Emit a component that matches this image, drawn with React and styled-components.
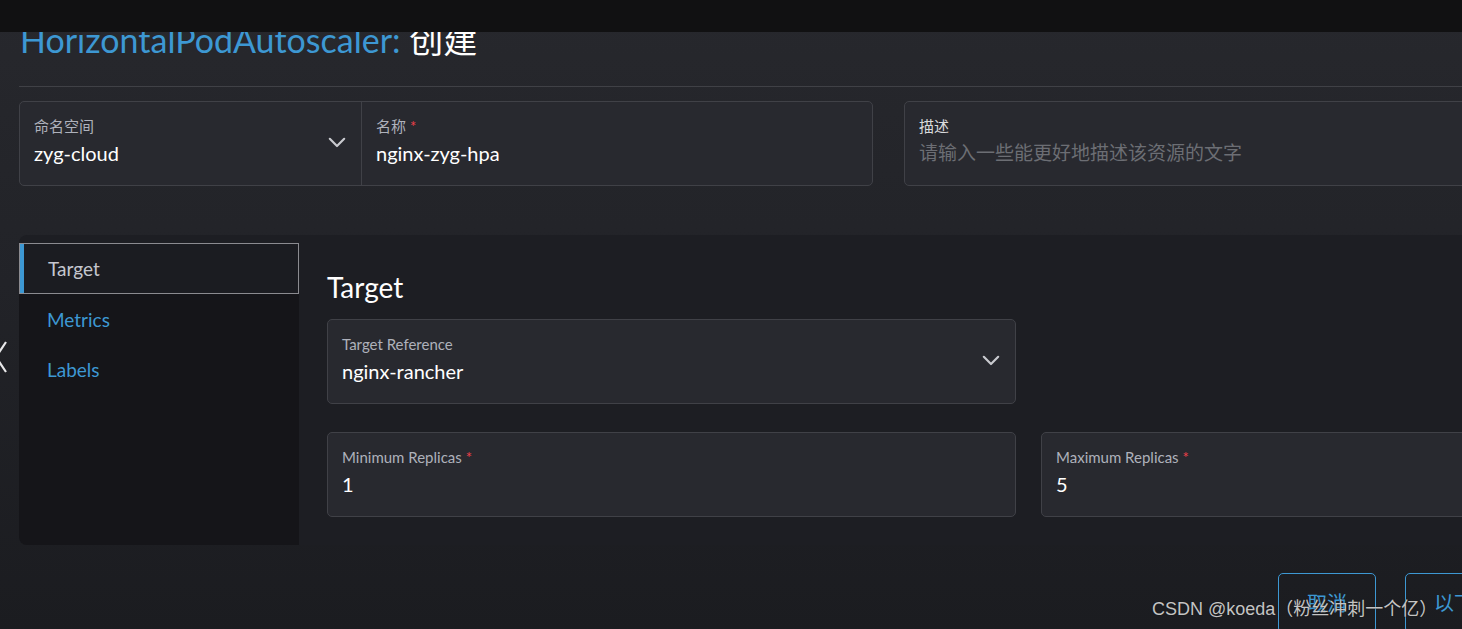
import React from 'react'
import styled, { createGlobalStyle } from 'styled-components'

const GlobalStyle = createGlobalStyle`
  html, body {
    margin: 0;
    padding: 0;
    height: 100%;
  }
  body {
    font-family: Lato, "Noto Sans CJK SC", "Noto Sans", sans-serif;
    background: linear-gradient(180deg, #27282d 0%, #222328 45%, #1b1c20 100%);
    color: #e6e6e8;
    overflow: hidden;
  }
`

const Chevron = ({ size = 18 }) => (
  <svg width={size} height={size * 0.6} viewBox="0 0 20 12" fill="none">
    <path d="M2 2 L10 10 L18 2" stroke="#c9cacf" strokeWidth="2.4" strokeLinecap="round" strokeLinejoin="round" />
  </svg>
)

const Field = ({ label, value, required, placeholder, select, dimLabel }) => (
  <FieldInner>
    <FieldText>
      <Label $bright={dimLabel}>
        {label}
        {required && <Star>*</Star>}
      </Label>
      {value ? <Value>{value}</Value> : <Placeholder>{placeholder}</Placeholder>}
    </FieldText>
    {select && (
      <Caret>
        <Chevron />
      </Caret>
    )}
  </FieldInner>
)

const App = () => (
  <Page>
    <GlobalStyle />
    <TopBar />
    <Title>
      <Kind>HorizontalPodAutoscaler:</Kind> 创建
    </Title>
    <Divider />

    <NameRow>
      <Box $width="854px">
        <Split $width="341px">
          <Field label="命名空间" value="zyg-cloud" select />
        </Split>
        <Split $grow>
          <Field label="名称" value="nginx-zyg-hpa" required />
        </Split>
      </Box>
      <Box $grow>
        <Field label="描述" placeholder="请输入一些能更好地描述该资源的文字" dimLabel />
      </Box>
    </NameRow>

    <Tabbed>
      <SideNav>
        <Tab $active>Target</Tab>
        <Tab>Metrics</Tab>
        <Tab>Labels</Tab>
      </SideNav>
      <Content>
        <Heading>Target</Heading>
        <Row>
          <Box $width="689px">
            <Field label="Target Reference" value="nginx-rancher" select />
          </Box>
        </Row>
        <Row $gap="25px">
          <Box $width="689px">
            <Field label="Minimum Replicas" value="1" required />
          </Box>
          <Box $grow>
            <Field label="Maximum Replicas" value="5" required />
          </Box>
        </Row>
      </Content>
    </Tabbed>

    <Footer>
      <OutlineButton $width="98px">取消</OutlineButton>
      <OutlineButton $width="98px">以下</OutlineButton>
    </Footer>

    <Collapse>
      <svg width="14" height="34" viewBox="0 0 14 34" fill="none">
        <path d="M12 2 L2 17 L12 32" stroke="#e8e8ea" strokeWidth="2.2" />
      </svg>
    </Collapse>

    <Watermark>CSDN @koeda（粉丝冲刺一个亿）</Watermark>
  </Page>
)

export default App

const Page = styled.div`
  position: relative;
  height: 629px;
  padding-left: 19px;
  overflow: hidden;
`

const TopBar = styled.div`
  position: absolute;
  left: 0;
  top: 0;
  right: 0;
  height: 32px;
  background: #111112;
  z-index: 2;
`

const Title = styled.h1`
  margin: 0;
  padding-top: 20px;
  padding-left: 1px;
  font-size: 34px;
  font-weight: 400;
  line-height: 40px;
  color: #ffffff;
  white-space: nowrap;
`

const Kind = styled.span`
  color: #3d98d3;
`

const Divider = styled.div`
  margin-top: 26px;
  height: 1px;
  background: #404146;
`

const NameRow = styled.div`
  display: flex;
  gap: 31px;
  margin-top: 14px;
  width: 1700px;
`

const Row = styled.div`
  display: flex;
  gap: ${(p) => p.$gap || '0'};
  margin-bottom: 28px;
  width: 1400px;
`

const Box = styled.div`
  display: flex;
  box-sizing: border-box;
  height: 85px;
  width: ${(p) => p.$width || 'auto'};
  flex: ${(p) => (p.$grow ? '1' : 'none')};
  background: #28292f;
  border: 1px solid #404147;
  border-radius: 5px;
`

const Split = styled.div`
  display: flex;
  width: ${(p) => p.$width || 'auto'};
  flex: ${(p) => (p.$grow ? '1' : 'none')};
  & + & {
    border-left: 1px solid #404147;
  }
`

const FieldInner = styled.div`
  flex: 1;
  display: flex;
  align-items: center;
  padding: 0 15px 0 14px;
`

const FieldText = styled.div`
  flex: 1;
  display: flex;
  flex-direction: column;
  padding-bottom: 6px;
`

const Label = styled.div`
  font-size: 15px;
  line-height: 18px;
  color: ${(p) => (p.$bright ? '#d9dadc' : '#aeb1bb')};
`

const Star = styled.span`
  color: #f0404a;
  margin-left: 4px;
`

const Value = styled.div`
  margin-top: 6px;
  font-size: 20px;
  line-height: 24px;
  color: #ffffff;
`

const Placeholder = styled(Value)`
  color: #6c6e74;
  font-size: 19px;
`

const Caret = styled.div`
  display: flex;
  align-items: center;
  padding-bottom: 2px;
`

const Tabbed = styled.div`
  display: flex;
  margin-top: 49px;
  height: 310px;
  background: #1d1e23;
  border-radius: 8px 0 0 8px;
  width: 1500px;
`

const SideNav = styled.div`
  flex: none;
  width: 280px;
  margin-top: 8px;
  background: #151519;
  border-bottom-left-radius: 8px;
`

const Tab = styled.div`
  box-sizing: border-box;
  height: ${(p) => (p.$active ? '51px' : '50px')};
  display: flex;
  align-items: center;
  padding-left: 28px;
  font-size: 19px;
  color: ${(p) => (p.$active ? '#c5c7cf' : '#3d98d3')};
  border: ${(p) => (p.$active ? '1px solid #8b8b90' : 'none')};
  box-shadow: ${(p) => (p.$active ? 'inset 4px 0 0 #3d98d3' : 'none')};
  background: ${(p) => (p.$active ? '#1b1c21' : 'transparent')};
`

const Content = styled.div`
  flex: 1;
  padding: 33px 0 0 28px;
`

const Heading = styled.h2`
  margin: 0 0 13px;
  font-size: 28px;
  font-weight: 400;
  line-height: 38px;
  color: #ffffff;
`

const Footer = styled.div`
  display: flex;
  justify-content: flex-end;
  gap: 29px;
  margin-top: 28px;
  margin-right: -41px;
`

const OutlineButton = styled.div`
  box-sizing: border-box;
  width: ${(p) => p.$width};
  height: 60px;
  display: flex;
  justify-content: center;
  padding-top: 14px;
  font-size: 20px;
  color: #3d98d3;
  border: 1px solid #3d98d3;
  border-radius: 5px;
  white-space: nowrap;
  overflow: hidden;
`

const Collapse = styled.div`
  position: absolute;
  left: -6px;
  top: 340px;
`

const Watermark = styled.div`
  position: absolute;
  left: 1152px;
  top: 594px;
  font-family: "Liberation Sans", "Noto Sans CJK SC", sans-serif;
  font-size: 18px;
  color: #c4c4c4;
  white-space: nowrap;
  text-shadow: 0 0 1px #111;
`
